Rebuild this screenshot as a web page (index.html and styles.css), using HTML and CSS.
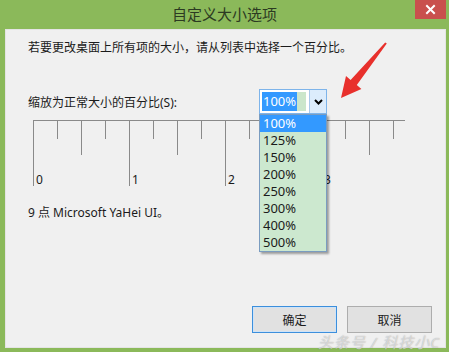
FILE: index.html
```html
<!DOCTYPE html>
<html lang="zh-CN">
<head>
    <meta charset="UTF-8">
    <meta name="viewport" content="width=device-width, initial-scale=1.0">
    <title>自定义大小选项</title>
    <link rel="stylesheet" href="styles.css">
</head>
<body>
    <div class="window">
        <div class="titlebar">
            <span class="title">自定义大小选项</span>
            <button class="close" aria-label="关闭">
                <svg width="11" height="11" viewBox="0 0 11 11">
                    <path d="M2 2 L9 9 M9 2 L2 9" stroke="#fff" stroke-width="2" stroke-linecap="square"/>
                </svg>
            </button>
        </div>

        <div class="content">
            <p class="intro">若要更改桌面上所有项的大小，请从列表中选择一个百分比。</p>

            <div class="scale-row">
                <label for="scale">缩放为正常大小的百分比(S):</label>
                <div class="combo" id="scale">
                    <div class="combo-field"><span class="sel">100%</span><span class="caret"></span></div>
                    <div class="combo-btn">
                        <svg width="9" height="6" viewBox="0 0 9 6">
                            <path d="M1 1 L4.5 4.5 L8 1" fill="none" stroke="#000" stroke-width="2"/>
                        </svg>
                    </div>
                    <ul class="dropdown">
                        <li class="active">100%</li>
                        <li>125%</li>
                        <li>150%</li>
                        <li>200%</li>
                        <li>250%</li>
                        <li>300%</li>
                        <li>400%</li>
                        <li>500%</li>
                    </ul>
                </div>
            </div>

            <svg class="ruler" width="380" height="70" viewBox="0 0 380 70">
                <line x1="5" y1="0.5" x2="377" y2="0.5" stroke="#8a8a8a"/>
                <g stroke="#8a8a8a">
                    <line x1="5.5" y1="0" x2="5.5" y2="66"/>
                    <line x1="29.5" y1="0" x2="29.5" y2="19"/>
                    <line x1="53.5" y1="0" x2="53.5" y2="35"/>
                    <line x1="77.5" y1="0" x2="77.5" y2="19"/>
                    <line x1="101.5" y1="0" x2="101.5" y2="66"/>
                    <line x1="125.5" y1="0" x2="125.5" y2="19"/>
                    <line x1="149.5" y1="0" x2="149.5" y2="35"/>
                    <line x1="173.5" y1="0" x2="173.5" y2="19"/>
                    <line x1="197.5" y1="0" x2="197.5" y2="66"/>
                    <line x1="221.5" y1="0" x2="221.5" y2="19"/>
                    <line x1="245.5" y1="0" x2="245.5" y2="35"/>
                    <line x1="269.5" y1="0" x2="269.5" y2="19"/>
                    <line x1="293.5" y1="0" x2="293.5" y2="66"/>
                    <line x1="317.5" y1="0" x2="317.5" y2="19"/>
                    <line x1="341.5" y1="0" x2="341.5" y2="35"/>
                    <line x1="365.5" y1="0" x2="365.5" y2="19"/>
                </g>
                <g class="ruler-num">
                    <text x="8" y="64">0</text>
                    <text x="104" y="64">1</text>
                    <text x="200" y="64">2</text>
                    <text x="296" y="64">3</text>
                </g>
            </svg>

            <p class="font-note">9 点 Microsoft YaHei UI。</p>

            <div class="actions">
                <button class="btn default">确定</button>
                <button class="btn">取消</button>
            </div>
        </div>

        <svg class="arrow" width="60" height="70" viewBox="335 38 60 70">
            <polygon points="341,98 346,76 350.6,80 385.2,42.4 386.8,43.6 356.8,85 361.4,89" fill="#e8302c"/>
        </svg>
        <span class="watermark">头条号 / 科技小C</span>
    </div>
</body>
</html>
```

FILE: styles.css
```css
*{
    box-sizing: border-box;
}
body{
    margin: 0;
    font-family: "Noto Sans", "Noto Sans CJK SC", sans-serif;
    font-size: 12px;
    color: #1b1b1b;
}
.window{
    position: relative;
    width: 449px;
    height: 352px;
    background-color: #8bb95a;
    display: flex;
    flex-direction: column;
    overflow: hidden;
}
.titlebar{
    height: 29px;
    display: grid;
    grid-template-columns: 1fr auto 1fr;
}
.title{
    grid-column: 2;
    align-self: center;
    font-size: 15px;
    line-height: 20px;
    color: #2c3a22;
    margin-top: -1px;
}
.close{
    grid-column: 3;
    justify-self: end;
    align-self: start;
    width: 31px;
    height: 19px;
    margin-right: 3px;
    padding: 0;
    border: none;
    background-color: #c9504d;
    display: flex;
    align-items: center;
    justify-content: center;
}
.content{
    flex: 1;
    margin: 0 3px 4px 5px;
    background-color: #f0f0f0;
    border: 1px solid #e4e4e4;
    padding: 0 13px 14px 22px;
    display: flex;
    flex-direction: column;
}
p{
    margin: 0;
    line-height: 16px;
}
.intro{
    margin-top: 10px;
}
.scale-row{
    display: flex;
    align-items: center;
    margin-top: 33px;
}
.scale-row label{
    width: 231px;
    line-height: 16px;
    padding-top: 2px;
}
.combo{
    position: relative;
    display: flex;
    width: 68px;
    height: 25px;
    border: 1px solid #7eb4ea;
    background-color: #fff;
}
.combo-field{
    flex: 1;
    display: flex;
    align-items: center;
    padding-left: 2px;
}
.sel{
    background-color: #3399ff;
    color: #fff;
    font-size: 13px;
    line-height: 19px;
    padding: 0 1px;
}
.caret{
    width: 9px;
    height: 19px;
    background-color: #cbe6cb;
}
.combo-btn{
    width: 17px;
    border-left: 1px solid #a9c9ea;
    background-color: #dcecfc;
    display: flex;
    align-items: center;
    justify-content: center;
}
.dropdown{
    position: absolute;
    top: 24px;
    left: -1px;
    width: 68px;
    margin: 0;
    padding: 0;
    list-style: none;
    background-color: #cce8cf;
    border: 1px solid #7a9cc0;
    box-shadow: 2px 2px 2px rgba(0, 0, 0, 0.35);
    z-index: 2;
}
.dropdown li{
    height: 17px;
    line-height: 17px;
    padding-left: 3px;
    font-size: 13px;
    color: #1b1b1b;
}
.dropdown li.active{
    background-color: #3399ff;
    color: #fff;
}
.ruler{
    display: block;
    margin-top: 6px;
}
.ruler-num text{
    font-family: "Noto Sans", sans-serif;
    font-size: 12px;
    fill: #1b1b1b;
}
.font-note{
    margin-top: 15px;
}
.actions{
    margin-top: auto;
    display: flex;
    justify-content: flex-end;
    gap: 10px;
}
.btn{
    width: 85px;
    height: 27px;
    font-family: "Noto Sans", "Noto Sans CJK SC", sans-serif;
    font-size: 12px;
    color: #1b1b1b;
    background-color: #e1e1e1;
    border: 1px solid #adadad;
    padding: 0;
}
.btn.default{
    border-color: #3c8fdc;
    box-shadow: inset 0 0 0 1px #cfe3f7;
}
.arrow{
    position: absolute;
    left: 335px;
    top: 38px;
}
.watermark{
    position: absolute;
    right: 9px;
    bottom: 1px;
    font-size: 15px;
    line-height: 18px;
    font-style: italic;
    color: rgba(255, 255, 255, 0.55);
    text-shadow: 0 0 1px rgba(120, 120, 120, 0.7);
    letter-spacing: 1px;
}
```
